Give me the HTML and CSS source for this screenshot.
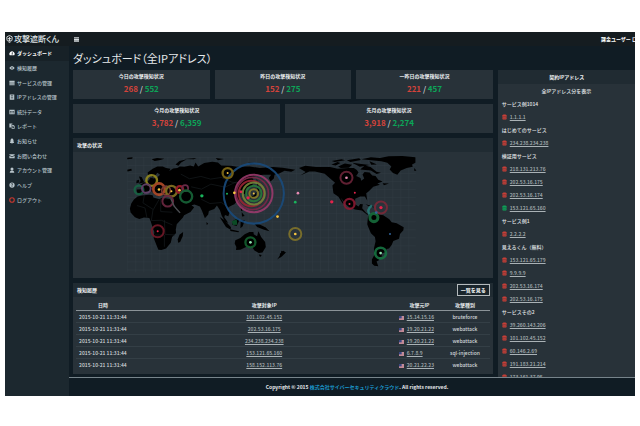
FILE: index.html
```html
<!DOCTYPE html>
<html lang="ja">
<head>
<meta charset="utf-8">
<meta name="viewport" content="width=device-width, initial-scale=1">
<title>攻撃遮断くん</title>
<link rel="stylesheet" href="styles.css">
</head>
<body>
<svg class="sprite" aria-hidden="true">
  <symbol id="db" viewBox="0 0 12 14"><path d="M1 2.500C1 .2 11 .2 11 2.500v9c0 2.300-10 2.300-10 0z"/><path d="M1 4.500c2 1.500 8 1.500 10 0M1 8.500c2 1.500 8 1.500 10 0" fill="none" stroke="#263138" stroke-width="1"/></symbol>
  <symbol id="flag" viewBox="0 0 15 12"><path fill="#d9c3cb" d="M0 0h15v12H0z"/><path stroke="#a9495a" stroke-width="1.500" d="M0 5h15M0 8h15M0 11h15M7 2h8"/><path fill="#3a4684" d="M0 0h8v7H0z"/></symbol>
</svg>
<div class="app">
  <div class="side">
    <a class="brand" href="#"><svg viewBox="0 0 16 18" aria-hidden="true"><path d="M8 1l6 3v5c0 4-3 6-6 8-3-2-6-4-6-8V4zM8 4v11M4 8h8M5 12h6" fill="none" stroke="currentColor" stroke-width="2"/></svg>攻撃遮断くん</a>
    <nav>
      <ul class="menu">
        <li><a class="active" href="#"><svg viewBox="0 0 16 16"><path fill-rule="evenodd" d="M2 14a7 7 0 1 1 12 0zM7 12h3L9 5H8z"/></svg>ダッシュボード</a></li>
        <li><a href="#"><svg viewBox="0 0 16 16"><path fill-rule="evenodd" d="M1 8c4-6 10-6 14 0-4 6-10 6-14 0zm5 0a2 2 0 1 0 4 0 2 2 0 0 0-4 0z"/></svg>検知履歴</a></li>
        <li><a href="#"><svg viewBox="0 0 16 16"><path d="M1 2h14v3H1zM1 6h14v4H1zM1 11h14v3H1z"/></svg>サービスの管理</a></li>
        <li><a href="#"><svg viewBox="0 0 16 16"><path fill-rule="evenodd" d="M2 1h12v14H2zM5 4v2h6V4zM5 8v1h6V8zM5 11v1h6v-1z"/></svg>IPアドレスの管理</a></li>
        <li><a href="#"><svg viewBox="0 0 16 16"><path fill-rule="evenodd" d="M1 2h14v12H1zM3 5v2h4V5zM9 5v2h4V5zM3 9v2h4V9zM9 9v2h4V9z"/></svg>統計データ</a></li>
        <li><a href="#"><svg viewBox="0 0 16 16"><path fill-rule="evenodd" d="M1 1h8v3H6v8H1zM7 5h5l3 3v7H7zM9 7v6h4V9h-2V7z"/></svg>レポート</a></li>
        <li><a href="#"><svg viewBox="0 0 16 16"><path d="M2 13c2-2 2-4 2-7 1-6 7-6 8 0 0 3 0 5 2 7zM6 14h4l-2 2z"/></svg>お知らせ</a></li>
        <li><a href="#"><svg viewBox="0 0 16 16"><path d="M1 3h14v2L8 9 1 5zM1 7l7 4 7-4v7H1z"/></svg>お問い合わせ</a></li>
        <li><a href="#"><svg viewBox="0 0 16 16"><circle cx="8" cy="5" r="4"/><path d="M2 15c0-8 12-8 12 0z"/></svg>アカウント管理</a></li>
        <li><a href="#"><svg viewBox="0 0 16 16"><circle cx="8" cy="8" r="7"/><path d="M6 6c0-3 5-2 4 0L8 8v2M8 11v2" fill="none" stroke="#1e2a31" stroke-width="2"/></svg>ヘルプ</a></li>
        <li><a href="#"><svg viewBox="0 0 16 16"><circle cx="8" cy="8" r="6" fill="none" stroke="#c8372f" stroke-width="3"/></svg>ログアウト</a></li>
      </ul>
    </nav>
  </div>
  <header class="topbar">
    <button class="toggle" type="button" aria-label="メニュー"><svg viewBox="0 0 12 12"><path d="M0 2h12M0 6h12M0 10h12" stroke="currentColor" stroke-width="3"/></svg></button>
    <a class="user" href="#">課金ユーザー ロ</a>
  </header>
  <main class="content">
    <h1>ダッシュボード（全IPアドレス）</h1>
    <div class="columns">
      <div class="left">
        <div class="stats">
          <section class="stat"><h2>今日の攻撃検知状況</h2><p><b class="red">268</b> / <b class="green">552</b></p></section>
          <section class="stat"><h2>昨日の攻撃検知状況</h2><p><b class="red">152</b> / <b class="green">275</b></p></section>
          <section class="stat"><h2>一昨日の攻撃検知状況</h2><p><b class="red">221</b> / <b class="green">457</b></p></section>
        </div>
        <div class="stats">
          <section class="stat"><h2>今月の攻撃検知状況</h2><p><b class="red">3,782</b> / <b class="green">6,359</b></p></section>
          <section class="stat"><h2>先月の攻撃検知状況</h2><p><b class="red">3,918</b> / <b class="green">2,274</b></p></section>
        </div>
        <section class="panel">
          <div class="panel-head"><h2>攻撃の状況</h2></div>
          <svg class="map" viewBox="12 51 1254 375" role="img" aria-label="攻撃の状況">
            <defs><pattern id="grid" width="24" height="24" patternUnits="userSpaceOnUse" x="174" y="66"><path d="M24 0H0V24" fill="none" stroke="#313e46" stroke-width="2"/></pattern></defs>
            <path fill="url(#grid)" d="M174 66h862v344H174z"/>
            <g class="land">
              <path d="M205 184L218 181 240 179 250 180 252 187 270 192 278 188 305 192 310 203 321 224 330 235 346 233 341 246 322 267 319 283 320 293 308 305 304 322 290 339 276 344 267 343 260 326 253 308 255 290 249 274 244 258 240 248 224 247 210 251 197 246 184 232 182 220 186 205 194 193z"/>
              <path d="M341 290l-1 12-8 18-6 2-1-10 5-14z"/>
              <path d="M204 178L202 163 217 162 218 153 211 149 225 142 238 136 244 127 253 130 263 128 272 119 264 113 257 122 249 127 246 117 236 120 235 112 250 101 264 94 280 94 290 99 303 101 300 108 311 100 324 99 331 94 345 95 362 91 373 94 378 82 386 94 404 84 428 80 445 82 455 91 484 92 501 95 540 94 570 99 610 96 638 98 676 104 664 110 644 107 628 115 614 119 612 130 602 139 597 129 604 119 580 119 560 122 546 126 554 139 546 152 531 157 527 165 530 178 522 176 518 166 507 164 511 176 507 192 494 207 480 214 472 220 480 231 476 243 466 239 464 246 476 263 466 259 456 241 451 225 442 211 434 221 418 227 416 238 406 249 397 226 391 214 375 208 366 210 374 216 363 230 338 243 332 241 320 220 306 191 305 181 282 181 275 173 263 174 267 184 256 176 243 166 234 168 222 175z"/>
              <path d="M209 124l8 2 8 16-16 3 5-7zM202 136l7-2 1 8-9 2zM174 68l16-1-1 4-15 2zM174 104l12-3 2 5-13 3zM247 73l16-4 22 2-12 4-17 3zM318 88l12-10 22-5-17 9-8 10zM346 72l35-3-8 4zM438 69l25 3-18 4zM535 83l20 1-12 4zM560 129l7 20-4 5zM562 158l12 3-9 8zM560 170l-1 12-16 8-2-5 11-4zM411 260l5 6-5 2zM513 213l6 13-5 1zM516 231l9 11-8 2z"/>
              <path d="M450 245l15 10 19 21-1 7-14-8zM482 282l26 6-2 3-24-4zM490 257l14-9 5 7-8 17-13-4zM513 256l12-1-6 18-7 6zM554 265l17 3 16 8 12 12-16-5-21-8zM567 357l9 2-5 6z"/>
              <path d="M497 315L512 308 525 297 539 290 551 290 552 297 562 303 566 288 574 305 586 320 588 335 578 351 567 353 554 345 548 336 529 335 512 343 499 344 500 335 495 324zM634 346l13 5-13 10zM630 360l4 3-12 9z"/>
              <path d="M203 211l24 7 6 30M225 180l-4 23 31 20 17-30M251 223l-5 33 30-1 33 14M274 192v37l35 2M285 254l2 43 30 2M256 299h29v35M334 117l26 14 34-7 29 8 32-5 31 14 29 4M365 155l31 7 28-15 42 9 35-16M395 192l26 13 34-3 15 10" fill="none" stroke="#171c1f" stroke-width="2"/>
            </g>
            <g class="land" transform="translate(630 0)">
              <path d="M57 99L76 92 108 96 150 96 173 101 205 99 221 99 230 105 235 112 228 123 241 129 243 137 252 130 247 118 253 111 268 112 276 121 286 123 294 134 307 139 291 145 299 149 279 155 265 169 258 174 261 196 254 184 240 184 225 191 225 207 235 214 240 206 248 207 246 219 258 233 269 239 260 238 245 226 225 223 207 216 197 207 182 188 192 206 187 204 175 185 160 174 157 151 165 143 145 126 134 116 105 109 88 109 61 121 77 111z"/>
              <path d="M244 73L272 67 299 69 325 64 366 63 405 67 405 83 395 88 397 95 379 99 361 106 351 119 338 114 328 103 333 94 321 83 303 79zM240 103l14-12 17 5 18 14 13 3-13 4-17-11zM174 94l20-9 22 4-10 9-24 1zM154 89l18-8 9 3-14 7zM155 78l29-5 11 3-31 5zM200 76l37-6 5 5-31 6zM216 83l22 3 31 4-30 5zM268 79l22 9-17 1zM307 144l19 1-15 5zM401 99l7 7-6 2zM256 207l22 6 3 4-17-5z"/>
              <path d="M263 247L269 238 280 234 292 237 309 240 327 252 334 261 349 264 370 276 369 285 359 296 356 310 339 317 334 329 326 339 319 341 317 350 303 354 305 363 295 367 297 374 289 378 294 392 282 391 275 384 275 372 283 357 281 339 286 318 284 305 272 294 265 277 261 267zM0 355l10-9 8 5-12 12-6 4z"/>
            </g>
            <g fill="none" class="rings">
              <circle cx="552" cy="175" r="90" stroke="#194b7c" stroke-width="6"/>
              <circle cx="552" cy="175" r="56" stroke="#9a3a6c" stroke-width="6"/>
              <circle cx="548" cy="175" r="48" stroke="#7b2748" stroke-width="5"/>
              <circle cx="545" cy="175" r="38" stroke="#9b2433" stroke-width="6"/>
              <circle cx="552" cy="175" r="33" stroke="#75863a" stroke-width="6"/>
              <circle cx="552" cy="175" r="23" stroke="#267a3a" stroke-width="6"/>
              <circle cx="552" cy="175" r="13" stroke="#887d27" stroke-width="6"/>
              <circle cx="474" cy="114" r="15" stroke="#806b18" stroke-width="7"/>
              <circle cx="247" cy="136" r="16" stroke="#93891f" stroke-width="7"/>
              <circle cx="209" cy="164" r="13" stroke="#176343" stroke-width="7"/>
              <circle cx="231" cy="160" r="13" stroke="#67436e" stroke-width="6"/>
              <circle cx="269" cy="162" r="17" stroke="#b44d2a" stroke-width="8"/>
              <circle cx="290" cy="166" r="13" stroke="#84403c" stroke-width="5"/>
              <circle cx="306" cy="168" r="16" stroke="#877423" stroke-width="7"/>
              <circle cx="331" cy="163" r="10" stroke="#a31b2b" stroke-width="7"/>
              <circle cx="347" cy="159" r="9" stroke="#743050" stroke-width="5"/>
              <circle cx="350" cy="184" r="18" stroke="#176438" stroke-width="7"/>
              <circle cx="295" cy="198" r="16" stroke="#6d2942" stroke-width="6"/>
              <path d="M304 190l10 23 18 20" stroke="#55575b" stroke-width="4"/>
              <circle cx="265" cy="288" r="18" stroke="#721928" stroke-width="6"/>
              <circle cx="542" cy="321" r="15" stroke="#13602f" stroke-width="7"/>
              <circle cx="676" cy="296" r="18" stroke="#81742a" stroke-width="6"/>
              <circle cx="829" cy="128" r="18" stroke="#6b2438" stroke-width="6"/>
              <circle cx="838" cy="206" r="15" stroke="#8a1931" stroke-width="7"/>
              <circle cx="932" cy="217" r="18" stroke="#7a2938" stroke-width="6"/>
              <path d="M905 211q-17 13-7 27" stroke="#277a76" stroke-width="7"/>
              <circle cx="911" cy="247" r="12" stroke="#176c3b" stroke-width="9"/>
              <circle cx="931" cy="353" r="16" stroke="#167341" stroke-width="8"/>
            </g>
            <path d="M486 258l15-6 2 16-13 1z" fill="#0b4a25"/>
            <g>
              <g fill="#f5c542"><circle cx="269" cy="163" r="4"/><circle cx="330" cy="165" r="4"/><circle cx="306" cy="168" r="3"/><circle cx="474" cy="114" r="3"/><circle cx="494" cy="173" r="4"/><circle cx="552" cy="175" r="3"/><circle cx="623" cy="244" r="4"/><circle cx="676" cy="296" r="4"/></g>
              <g fill="#e3234b"><circle cx="265" cy="288" r="3"/><circle cx="535" cy="188" r="5"/><circle cx="514" cy="170" r="4"/><circle cx="785" cy="200" r="5"/><circle cx="838" cy="206" r="3"/><circle cx="854" cy="173" r="3"/><circle cx="932" cy="217" r="5"/></g>
              <g fill="#19b45c"><circle cx="397" cy="182" r="5"/><circle cx="472" cy="176" r="3"/><circle cx="676" cy="201" r="4"/></g>
              <g fill="#e58ab2"><circle cx="829" cy="128" r="4"/><circle cx="684" cy="174" r="4"/></g>
              <g fill="#8ee6b0"><circle cx="542" cy="321" r="4"/><circle cx="931" cy="353" r="4"/></g>
              <g fill="#2f6298"><circle cx="918" cy="232" r="4"/><circle cx="959" cy="296" r="3"/></g>
            </g>
          </svg>
        </section>
        <section class="panel">
          <div class="panel-head"><h2>検知履歴</h2><button class="more" type="button">一覧を見る</button></div>
          <div class="table-wrap">
            <table>
              <colgroup><col class="c-date"><col class="c-target"><col class="c-source"><col class="c-type"></colgroup>
              <thead><tr><th>日時</th><th>攻撃対象IP</th><th class="source">攻撃元IP</th><th>攻撃種別</th></tr></thead>
              <tbody>
                <tr><td>2015-10-21 11:31:44</td><td><a href="#">101.102.45.152</a></td><td class="source"><svg><use href="#flag"/></svg><a href="#">15.14.15.16</a></td><td>bruteforce</td></tr>
                <tr><td>2015-10-21 11:31:44</td><td><a href="#">202.53.16.175</a></td><td class="source"><svg><use href="#flag"/></svg><a href="#">19.20.21.22</a></td><td>webattack</td></tr>
                <tr><td>2015-10-21 11:31:44</td><td><a href="#">234.238.234.238</a></td><td class="source"><svg><use href="#flag"/></svg><a href="#">19.20.21.22</a></td><td>webattack</td></tr>
                <tr><td>2015-10-21 11:31:44</td><td><a href="#">153.121.65.160</a></td><td class="source"><svg><use href="#flag"/></svg><a href="#">6.7.8.9</a></td><td>sql-injection</td></tr>
                <tr><td>2015-10-21 11:31:44</td><td><a href="#">158.152.113.76</a></td><td class="source"><svg><use href="#flag"/></svg><a href="#">20.21.22.23</a></td><td>webattack</td></tr>
              </tbody>
            </table>
          </div>
        </section>
      </div>
      <aside class="panel ips">
        <div class="panel-head"><h2>契約IPアドレス</h2></div>
        <a class="all" href="#">全IPアドレス分を表示</a>
        <h3>サービス例1014</h3>
        <a href="#"><svg><use href="#db"/></svg><span>1.1.1.1</span></a>
        <h3>はじめてのサービス</h3>
        <a href="#"><svg><use href="#db"/></svg><span>234.238.234.238</span></a>
        <h3>検証用サービス</h3>
        <a href="#"><svg><use href="#db"/></svg><span>218.131.213.76</span></a>
        <a href="#"><svg><use href="#db"/></svg><span>202.53.16.175</span></a>
        <a href="#"><svg><use href="#db"/></svg><span>202.53.16.174</span></a>
        <a href="#"><svg class="ok"><use href="#db"/></svg><span>153.121.65.160</span></a>
        <h3>サービス例1</h3>
        <a href="#"><svg><use href="#db"/></svg><span>2.2.2.2</span></a>
        <h3>見えるくん（無料）</h3>
        <a href="#"><svg><use href="#db"/></svg><span>153.121.65.179</span></a>
        <a href="#"><svg><use href="#db"/></svg><span>9.9.9.9</span></a>
        <a href="#"><svg><use href="#db"/></svg><span>202.53.16.174</span></a>
        <a href="#"><svg><use href="#db"/></svg><span>202.53.16.175</span></a>
        <h3>サービスその2</h3>
        <a href="#"><svg><use href="#db"/></svg><span>39.260.143.206</span></a>
        <a href="#"><svg><use href="#db"/></svg><span>101.102.45.152</span></a>
        <a href="#"><svg><use href="#db"/></svg><span>60.146.2.69</span></a>
        <a href="#"><svg><use href="#db"/></svg><span>191.183.21.214</span></a>
        <a href="#"><svg><use href="#db"/></svg><span>173.161.37.95</span></a>
      </aside>
    </div>
  </main>
  <footer>Copyright © 2015 <a href="#">株式会社サイバーセキュリティクラウド</a>. All rights reserved.</footer>
</div>
</body>
</html>
```
FILE: styles.css
```css
* { box-sizing: border-box; }
body {
  margin: 0;
  padding: 32px 5px 29px;
  background: #fff;
  color: #d3d9dc;
  font: 500 5px/12px "Noto Sans CJK JP", sans-serif;
}
h1, h2, h3, p, ul { margin: 0; padding: 0; font-size: inherit; }
a { color: inherit; text-decoration: none; }
button { font: inherit; color: inherit; background: none; border: 0; padding: 0; }
svg { display: block; fill: currentColor; }
.sprite { position: absolute; width: 0; height: 0; }

.app {
  display: grid;
  grid-template-columns: 64px minmax(0, 1fr);
  grid-template-rows: 14px auto 19px;
  background: #101c24;
  overflow: hidden;
}
.side { grid-row: 1 / 4; background: #1c282f; }
.brand {
  display: flex;
  align-items: center;
  gap: 1px;
  height: 14px;
  padding-left: 1px;
  background: #151c20;
  color: #dfe3e5;
  font-size: 8px;
  font-feature-settings: "palt";
  white-space: nowrap;
}
.brand svg { width: 7px; height: 8px; flex: none; }
.menu { display: grid; grid-auto-rows: 1fr; height: 161px; list-style: none; }
.menu a {
  display: flex;
  align-items: center;
  gap: 2px;
  height: 100%;
  padding-left: 4px;
  white-space: nowrap;
  color: #b9c5cb;
}
.menu .active { background: #172127; color: #fff; font-weight: 700; }
.menu svg { width: 6px; height: 6px; }

.topbar {
  display: flex;
  align-items: center;
  justify-content: space-between;
  padding-left: 5px;
  background: #151c20;
}
.toggle svg { width: 5px; height: 5px; }
.user { margin-right: -2px; font-weight: 700; white-space: nowrap; color: #fff; }

.content { padding-left: 4px; }
h1 {
  padding: 2px 0;
  font-size: 11px;
  line-height: 20px;
  font-weight: 400;
  font-feature-settings: "palt";
  color: #e6eaec;
}
.columns { display: grid; grid-template-columns: minmax(0, 419fr) minmax(0, 137fr); gap: 5px; }
.left { display: grid; gap: 5px; padding-bottom: 3px; }
.stats { display: grid; grid-auto-flow: column; grid-auto-columns: 1fr; gap: 5px; }
.stat { height: 29px; background: #283239; text-align: center; }
.stat h2 { font-weight: 700; color: #eef0f1; }
.stat p { font-size: 8px; line-height: 14px; color: #d3d9dc; }
.red { color: #d5433b; }
.green { color: #0ca558; }

.panel { background: #283239; }
.panel-head {
  display: flex;
  align-items: center;
  justify-content: space-between;
  height: 14px;
  padding: 0 3px 0 4px;
  background: #202b32;
}
.panel-head h2 { font-weight: 700; color: #f0f2f3; }
.map { width: 100%; }
.land { fill: #000; }
.rings { opacity: .9; }
.more {
  height: 12px;
  padding: 0 3px;
  border: 1px solid #b4babd;
  background: #1a252c;
  color: #fff;
  font-weight: 700;
  line-height: 10px;
}
.table-wrap { padding: 2px 3px 3px; }
table { width: 100%; table-layout: fixed; border-collapse: collapse; text-align: center; }
.c-date { width: 13%; }
.c-target { width: 65%; }
.c-source { width: 10%; }
.c-type { width: 12%; }
th, td { height: 12px; padding: 0; line-height: 11px; white-space: nowrap; }
th { border-bottom: 1px solid #8b9398; font-weight: 700; color: #e6eaec; }
td { border-bottom: 1px solid #343f46; }
tbody tr:last-child td { border-bottom: 0; }
td a, .ips span { text-decoration: underline; color: #aab2b6; }
td.source { text-align: left; }
td.source svg { display: inline-block; width: 5px; height: 4px; margin-right: 3px; vertical-align: middle; }

.ips { height: 0; min-height: 100%; overflow: hidden; }
.ips .panel-head { justify-content: center; }
.ips > a, h3 { display: flex; align-items: center; gap: 3px; height: 13px; padding-left: 4px; white-space: nowrap; }
h3 { font-weight: 500; color: #e2e6e8; }
.ips > .all { justify-content: center; padding: 0; color: #e2e6e8; }
.ips svg { width: 5px; height: 6px; fill: #d04037; }
.ips svg.ok { fill: #0ca558; }

footer {
  border-top: 1px solid #77848b;
  padding: 3px 0 0 10px;
  text-align: center;
  font-weight: 700;
  color: #e6eaec;
}
footer a { color: #1b9bd0; }
```
